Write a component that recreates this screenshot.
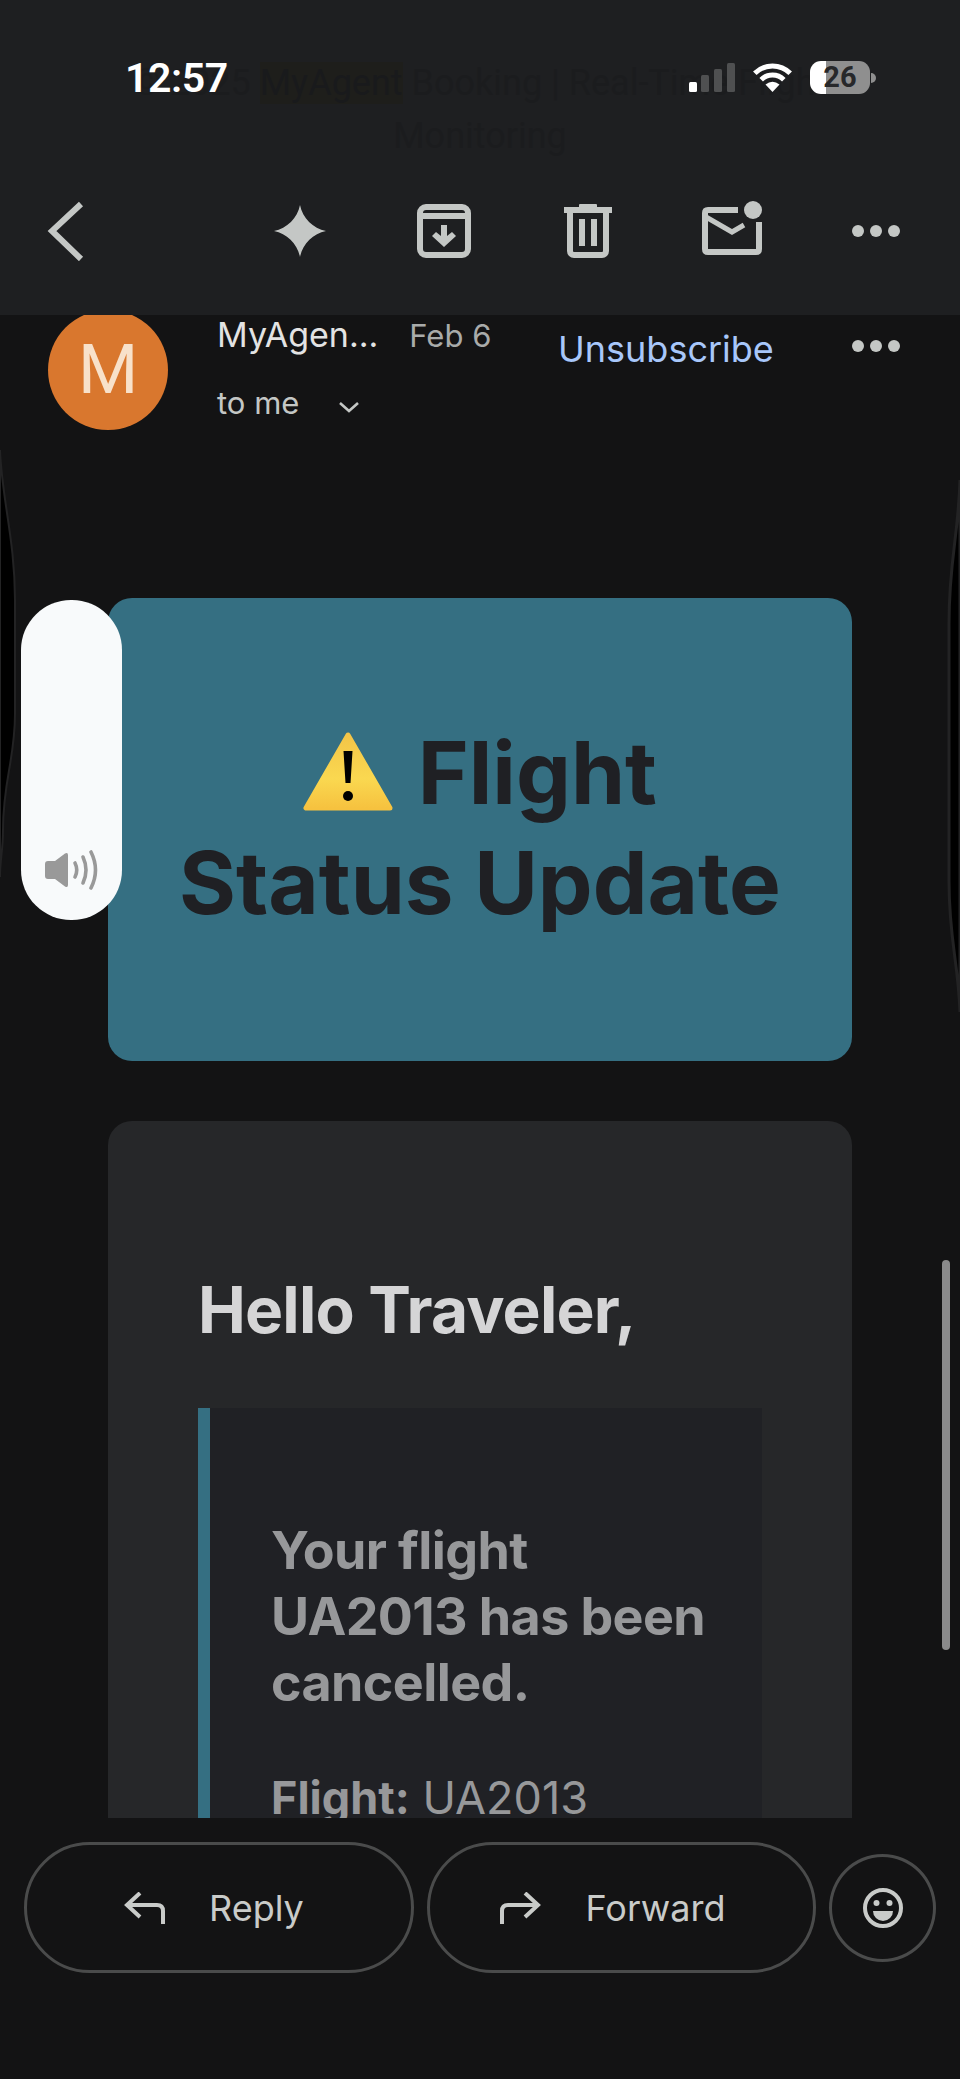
<style>
  :global(body) {
    margin: 0;
    background: #131314;
  }

  .screen {
    position: relative;
    width: 960px;
    height: 2079px;
    overflow: hidden;
    display: flex;
    flex-direction: column;
    background: #131314;
    font-family: Inter, Roboto, "Liberation Sans", sans-serif;
  }

  /* top bar */
  .topbar {
    position: relative;
    flex: none;
    height: 315px;
    box-sizing: border-box;
    background: #1e1f21;
    display: flex;
    flex-direction: column;
    z-index: 2;
  }

  .ghost-title {
    margin: 57px 0 0;
    padding: 0 100px;
    height: 144px;
    box-sizing: border-box;
    text-align: center;
    font-family: Roboto, "Liberation Sans", sans-serif;
    font-size: 36px;
    line-height: 53px;
    color: #1b1c1e;
  }

  .ghost-title mark {
    background: #1e1e1b;
    color: #191a1c;
  }

  .status {
    position: absolute;
    top: 61px;
    left: 125px;
    right: 90px;
    height: 33px;
    display: flex;
    align-items: center;
    font-family: Roboto, "Liberation Sans", sans-serif;
  }

  .time {
    font-size: 41px;
    font-weight: 600;
    letter-spacing: -0.4px;
    color: #fff;
    margin-right: auto;
  }

  .signal {
    width: 46px;
    height: 29px;
    margin-right: 17px;
  }

  .wifi {
    width: 41px;
    height: 29px;
    margin-right: 17px;
  }

  .battery {
    position: relative;
    width: 60px;
    height: 33px;
    border-radius: 11px;
    background: linear-gradient(90deg, #fff 16px, #8f8f8f 16px);
    color: #27282a;
    font-size: 29px;
    font-weight: 700;
    line-height: 33px;
    text-align: center;
  }

  .battery::after {
    content: "";
    position: absolute;
    left: 61px;
    top: 12px;
    width: 5px;
    height: 10px;
    border-radius: 0 5px 5px 0;
    background: #8f8f8f;
  }

  .toolbar {
    display: flex;
    align-items: center;
    padding: 0 54px 0 36px;
    height: 60px;
  }

  .toolbar svg {
    width: 60px;
    height: 60px;
    flex: none;
  }

  .actions {
    margin-left: auto;
    display: flex;
    gap: 84px;
  }

  /* message */
  .message {
    flex: none;
    height: 1503px;
    overflow: hidden;
  }

  .sender {
    display: flex;
    height: 115px;
    padding: 0 54px 0 48px;
    color: #e3e3e3;
  }

  .avatar {
    flex: none;
    width: 120px;
    height: 120px;
    margin-top: -5px;
    border-radius: 50%;
    background: #d9772e;
    color: #f8e1ca;
    font-family: Roboto, "Liberation Sans", sans-serif;
    font-size: 69px;
    line-height: 120px;
    text-align: center;
  }

  .who {
    width: 341px;
    flex: none;
    margin-left: 49px;
  }

  .who-top {
    display: flex;
    align-items: baseline;
    height: 40px;
  }

  .name {
    font-size: 34px;
    line-height: 40px;
    color: #e3e3e3;
  }

  .date {
    margin-left: 31px;
    font-size: 31px;
    color: #a9abaa;
  }

  .to {
    display: flex;
    align-items: center;
    margin-top: 29px;
    font-size: 31px;
    line-height: 38px;
    color: #c4c7c5;
  }

  .to svg {
    width: 22px;
    height: 12px;
    margin: 8px 0 0 39px;
  }

  .unsub {
    margin-top: 12px;
    font-size: 36px;
    line-height: 44px;
    height: 44px;
    color: #a8c7fa;
  }

  .more {
    width: 60px;
    height: 60px;
    margin: 1px 0 0 auto;
    flex: none;
  }

  .hero {
    margin: 168px 108px 0;
    height: 463px;
    box-sizing: border-box;
    padding: 120px 50px 0;
    border-radius: 24px;
    background: #356f82;
  }

  .hero h1 {
    margin: 0;
    text-align: center;
    font-size: 87px;
    line-height: 110px;
    font-weight: 700;
    color: #1f2024;
  }

  .warn {
    width: 90px;
    height: 79px;
    vertical-align: -7px;
    margin-right: 4px;
  }

  .card {
    margin: 60px 108px 0;
    padding: 145px 90px 60px;
    border-radius: 24px;
    background: #262729;
  }

  .card h2 {
    margin: 0;
    font-size: 64px;
    line-height: 88px;
    font-weight: 700;
    letter-spacing: -0.8px;
    color: #d5d5d6;
  }

  .notice {
    margin-top: 54px;
    border-left: 12px solid #356f82;
    padding: 110px 30px 0 61px;
    background: #202125;
    color: #97989a;
  }

  .notice p {
    margin: 0;
  }

  .headline {
    font-size: 52px;
    line-height: 66px;
    font-weight: 700;
    letter-spacing: -0.6px;
  }

  .line {
    margin-top: 52px !important;
    font-size: 45px;
    line-height: 60px;
  }

  .line strong {
    font-weight: 700;
  }

  /* reply bar */
  .replybar {
    flex: 1;
    display: flex;
    align-items: flex-start;
    gap: 13px;
    padding: 24px 24px 0;
  }

  .pill {
    box-sizing: border-box;
    width: 390px;
    height: 131px;
    border: 3px solid #4a4b4b;
    border-radius: 66px;
    background: none;
    display: flex;
    align-items: center;
    color: #c9cbc9;
    font-family: inherit;
    font-size: 36px;
  }

  .pill svg {
    width: 42px;
    height: 32px;
    flex: none;
  }

  .reply {
    padding-left: 97px;
    gap: 43px;
  }

  .forward {
    padding-left: 69px;
    gap: 45px;
  }

  .react {
    box-sizing: border-box;
    flex: none;
    width: 107px;
    height: 108px;
    margin-top: 12px;
    padding: 0;
    border: 3px solid #4a4b4b;
    border-radius: 50%;
    background: none;
    display: flex;
    align-items: center;
    justify-content: center;
  }

  .react svg {
    width: 40px;
    height: 40px;
  }

  /* overlays */
  .edges {
    position: absolute;
    left: 0;
    top: 0;
    width: 960px;
    height: 2079px;
    pointer-events: none;
  }

  .volume {
    position: absolute;
    left: 21px;
    top: 600px;
    width: 101px;
    height: 320px;
    border-radius: 50px;
    background: #f8fafb;
    display: flex;
    flex-direction: column;
    justify-content: flex-end;
    align-items: center;
    box-sizing: border-box;
    padding-bottom: 30px;
  }

  .volume svg {
    width: 54px;
    height: 40px;
  }

  .scroll {
    position: absolute;
    left: 942px;
    top: 1260px;
    width: 8px;
    height: 390px;
    border-radius: 4px;
    background: #8a8a8b;
  }
</style>

<div class="screen">
  <header class="topbar">
    <p class="ghost-title">© 2025 <mark>MyAgent</mark> Booking | Real-Time Flight Monitoring</p>

    <div class="status">
      <span class="time">12:57</span>
      <svg class="signal" viewBox="0 0 46 29">
        <rect x="0" y="19" width="8" height="10" rx="1.5" fill="#fff" />
        <rect x="12" y="12" width="8" height="17" rx="1.5" fill="#4f5051" />
        <rect x="25" y="6" width="8" height="23" rx="1.5" fill="#4f5051" />
        <rect x="38" y="0" width="8" height="29" rx="1.5" fill="#4f5051" />
      </svg>
      <svg class="wifi" viewBox="0 0 41 29" fill="none" stroke="#fff" stroke-width="5">
        <path d="M2.8 10.3a25 25 0 0 1 35.4 0" />
        <path d="M9.2 16.7a16 16 0 0 1 22.6 0" />
        <path d="M20.5 29L13.5 21.5Q20.5 16 27.5 21.5Z" fill="#fff" stroke="none" />
      </svg>
      <div class="battery">26</div>
    </div>

    <nav class="toolbar">
      <svg viewBox="0 0 60 60" fill="none" stroke="#c4c7c5" stroke-width="6">
        <path d="M45 3L16 30L45 58" />
      </svg>
      <div class="actions">
        <svg viewBox="0 0 60 60" fill="#c4c7c5">
          <path d="M30 4C32.5 17 43 27.5 56 30C43 32.5 32.5 43 30 56C27.5 43 17 32.5 4 30C17 27.5 27.5 17 30 4Z" />
        </svg>
        <svg viewBox="0 0 60 60" fill="none" stroke="#c4c7c5" stroke-width="6">
          <rect x="6" y="6" width="48" height="48" rx="6" />
          <path d="M3 15H57" />
          <path d="M27 24h6v11l5-4l4 4L30 46L18 35l4-4l5 4Z" fill="#c4c7c5" stroke="none" />
        </svg>
        <svg viewBox="0 0 60 60" fill="#c4c7c5">
          <rect x="6" y="6" width="48" height="6" />
          <rect x="21" y="3" width="18" height="4" rx="1" />
          <path d="M12 10V50a4 4 0 0 0 4 4h28a4 4 0 0 0 4-4V10" fill="none" stroke="#c4c7c5" stroke-width="6" />
          <rect x="21" y="18" width="6" height="27" />
          <rect x="33" y="18" width="6" height="27" />
        </svg>
        <svg viewBox="0 0 60 60" fill="none" stroke="#c4c7c5" stroke-width="6">
          <path d="M36 9H6Q3 9 3 12V48Q3 51 6 51H54Q57 51 57 48V21" />
          <path d="M4 16L30 31L42 24" stroke-width="5" />
          <circle cx="51" cy="9" r="9" fill="#c4c7c5" stroke="none" />
        </svg>
        <svg viewBox="0 0 60 60" fill="#c4c7c5">
          <circle cx="12" cy="30" r="6" />
          <circle cx="30" cy="30" r="6" />
          <circle cx="48" cy="30" r="6" />
        </svg>
      </div>
    </nav>
  </header>

  <main class="message">
    <div class="sender">
      <div class="avatar">M</div>
      <div class="who">
        <div class="who-top">
          <span class="name">MyAgen...</span>
          <span class="date">Feb 6</span>
        </div>
        <div class="to">
          <span>to me</span>
          <svg viewBox="0 0 22 12" fill="none" stroke="#c4c7c5" stroke-width="2.6">
            <path d="M2 2L11 10L20 2" />
          </svg>
        </div>
      </div>
      <span class="unsub">Unsubscribe</span>
      <svg class="more" viewBox="0 0 60 60" fill="#c4c7c5">
        <circle cx="12" cy="30" r="6" />
        <circle cx="30" cy="30" r="6" />
        <circle cx="48" cy="30" r="6" />
      </svg>
    </div>

    <section class="hero">
      <h1>
        <svg class="warn" viewBox="0 0 90 79">
          <defs>
            <linearGradient id="warnFill" x1="0" y1="0" x2="0" y2="1">
              <stop offset="0" stop-color="#f3c548" />
              <stop offset="0.6" stop-color="#fad850" />
              <stop offset="1" stop-color="#f6c23f" />
            </linearGradient>
          </defs>
          <path d="M45 3L3 76H87Z" fill="url(#warnFill)" stroke="url(#warnFill)" stroke-width="5" stroke-linejoin="round" />
          <path d="M40.5 19H49.5L47.5 51H42.5Z" fill="#000" />
          <circle cx="45" cy="64" r="5" fill="#000" />
        </svg>
        Flight Status Update
      </h1>
    </section>

    <section class="card">
      <h2>Hello Traveler,</h2>
      <div class="notice">
        <p class="headline">Your flight UA2013 has been cancelled.</p>
        <p class="line"><strong>Flight:</strong> UA2013</p>
      </div>
    </section>
  </main>

  <footer class="replybar">
    <button class="pill reply">
      <svg viewBox="0 0 42 32" fill="none" stroke="#c9cbc9" stroke-width="4">
        <path d="M16 1L3 13L16 25" />
        <path d="M3 13H33Q39 13 39 19V32" />
      </svg>
      <span>Reply</span>
    </button>
    <button class="pill forward">
      <svg viewBox="0 0 42 32" fill="none" stroke="#c9cbc9" stroke-width="4">
        <path d="M26 1L39 13L26 25" />
        <path d="M39 13H9Q3 13 3 19V32" />
      </svg>
      <span>Forward</span>
    </button>
    <button class="react" aria-label="React">
      <svg viewBox="0 0 40 40" fill="#c9cbc9">
        <circle cx="20" cy="20" r="18" fill="none" stroke="#c9cbc9" stroke-width="4" />
        <circle cx="13.5" cy="15" r="3" />
        <circle cx="26.5" cy="15" r="3" />
        <path d="M10 23H30A10 10 0 0 1 10 23Z" />
      </svg>
    </button>
  </footer>

  <!-- warped screen edge from the volume gesture -->
  <svg class="edges" viewBox="0 0 960 2079">
    <path d="M0 450C2 500 15 540 15 600V714C15 760 3 780 3 830C3 850 0 860 0 877Z" fill="#000" stroke="#232324" stroke-width="2" />
    <path d="M960 480C958 540 949 560 949 624V881C949 940 958 960 960 1012Z" fill="#000" stroke="#232324" stroke-width="3" />
  </svg>

  <div class="scroll"></div>

  <div class="volume">
    <svg viewBox="0 0 54 40" fill="none" stroke="#999" stroke-width="3.6" stroke-linecap="round">
      <path d="M0 14Q0 11 3 11H10L20 3.5Q23 2 23 5V35Q23 38 20 36.5L10 29H3Q0 29 0 26Z" fill="#999" stroke="none" />
      <path d="M30 13Q33.5 20 30 27" />
      <path d="M38 7Q44 20 38 33" />
      <path d="M46 2Q55 20 46 38" />
    </svg>
  </div>
</div>
